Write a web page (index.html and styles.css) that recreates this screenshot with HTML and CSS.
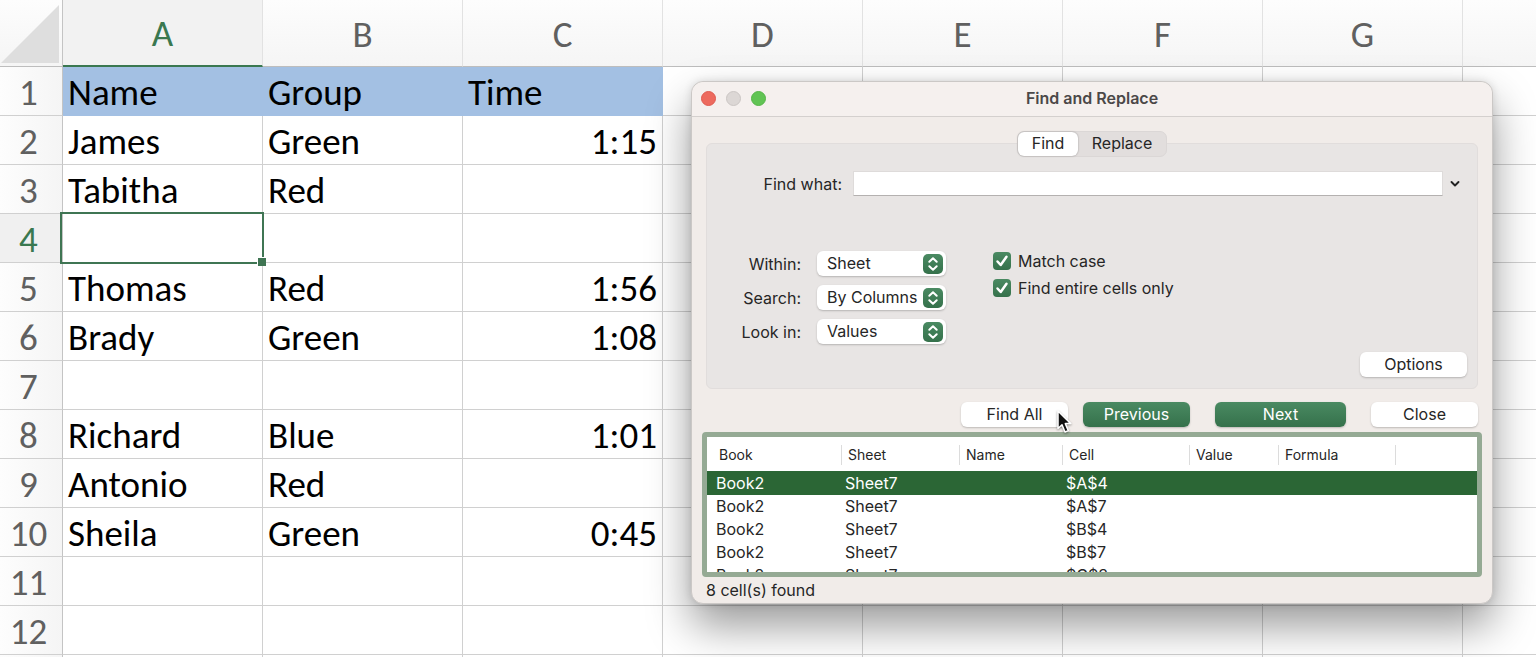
FILE: index.html
```html
<!DOCTYPE html>
<html lang="en">
<head>
<meta charset="utf-8">
<meta name="viewport" content="width=device-width, initial-scale=1">
<title>Find and Replace</title>
<link rel="stylesheet" href="styles.css">
</head>
<body>
<main class="workbook">
  <table class="grid">
    <colgroup><col class="col-index"><col class="col"><col class="col"><col class="col"><col class="col"><col class="col"><col class="col"><col class="col"><col></colgroup>
    <thead>
      <tr>
        <th class="corner"><svg class="corner-mark" viewBox="0 0 60 60" aria-hidden="true"><path d="M59 2V61H0Z" fill="#dedede"/></svg></th>
        <th class="active" scope="col">A</th><th scope="col">B</th><th scope="col">C</th><th scope="col">D</th><th scope="col">E</th><th scope="col">F</th><th scope="col">G</th><th></th>
      </tr>
    </thead>
    <tbody>
      <tr class="heading"><th scope="row">1</th><td>Name</td><td>Group</td><td>Time</td><td></td><td></td><td></td><td></td><td></td></tr>
      <tr><th scope="row">2</th><td>James</td><td>Green</td><td class="num">1:15</td><td></td><td></td><td></td><td></td><td></td></tr>
      <tr><th scope="row">3</th><td>Tabitha</td><td>Red</td><td></td><td></td><td></td><td></td><td></td><td></td></tr>
      <tr><th class="active" scope="row">4</th><td class="selected"></td><td></td><td></td><td></td><td></td><td></td><td></td><td></td></tr>
      <tr><th scope="row">5</th><td>Thomas</td><td>Red</td><td class="num">1:56</td><td></td><td></td><td></td><td></td><td></td></tr>
      <tr><th scope="row">6</th><td>Brady</td><td>Green</td><td class="num">1:08</td><td></td><td></td><td></td><td></td><td></td></tr>
      <tr><th scope="row">7</th><td></td><td></td><td></td><td></td><td></td><td></td><td></td><td></td></tr>
      <tr><th scope="row">8</th><td>Richard</td><td>Blue</td><td class="num">1:01</td><td></td><td></td><td></td><td></td><td></td></tr>
      <tr><th scope="row">9</th><td>Antonio</td><td>Red</td><td></td><td></td><td></td><td></td><td></td><td></td></tr>
      <tr><th scope="row">10</th><td>Sheila</td><td>Green</td><td class="num">0:45</td><td></td><td></td><td></td><td></td><td></td></tr>
      <tr><th scope="row">11</th><td></td><td></td><td></td><td></td><td></td><td></td><td></td><td></td></tr>
      <tr><th scope="row">12</th><td></td><td></td><td></td><td></td><td></td><td></td><td></td><td></td></tr>
      <tr><th></th><td></td><td></td><td></td><td></td><td></td><td></td><td></td><td></td></tr>
    </tbody>
  </table>

  <section class="dialog" role="dialog" aria-labelledby="dialog-title">
    <header class="titlebar">
      <div class="lights">
        <button class="light light-close" type="button" aria-label="Close window"></button>
        <button class="light light-min" type="button" aria-label="Minimize window" disabled></button>
        <button class="light light-zoom" type="button" aria-label="Zoom window"></button>
      </div>
      <h1 class="title" id="dialog-title">Find and Replace</h1>
    </header>
    <div class="dialog-body">
      <div class="tabs" role="tablist">
        <button class="tab tab-on" type="button" role="tab" aria-selected="true">Find</button>
        <button class="tab" type="button" role="tab" aria-selected="false">Replace</button>
      </div>
      <div class="panel">
        <div class="find-row">
          <label for="find-what">Find what:</label>
          <input class="find-input" id="find-what" type="text">
          <button class="history" type="button" aria-label="Recent searches">
            <svg width="10" height="8" viewBox="0 0 10 8" aria-hidden="true"><path d="M1.5 2L5 5.5L8.500 2" fill="none" stroke="#222" stroke-width="1.900" stroke-linecap="round" stroke-linejoin="round"/></svg>
          </button>
        </div>
        <div class="settings">
          <div class="choices">
            <label for="within">Within:</label>
            <div class="picker"><select id="within"><option>Sheet</option></select><svg class="stepper" viewBox="0 0 20 20" aria-hidden="true"><path d="M6.300 7.800L10 4.200L13.700 7.800M6.300 12.200L10 15.800L13.700 12.200"/></svg></div>
            <label for="search">Search:</label>
            <div class="picker"><select id="search"><option>By Columns</option></select><svg class="stepper" viewBox="0 0 20 20" aria-hidden="true"><path d="M6.300 7.800L10 4.200L13.700 7.800M6.300 12.200L10 15.800L13.700 12.200"/></svg></div>
            <label for="look-in">Look in:</label>
            <div class="picker"><select id="look-in"><option>Values</option></select><svg class="stepper" viewBox="0 0 20 20" aria-hidden="true"><path d="M6.300 7.800L10 4.200L13.700 7.800M6.300 12.200L10 15.800L13.700 12.200"/></svg></div>
          </div>
          <div class="checks">
            <label class="check"><span class="box"><input type="checkbox" checked><svg class="tick" viewBox="0 0 18 18" aria-hidden="true"><path d="M4.500 9.500L7.700 13L13.500 4.700"/></svg></span>Match case</label>
            <label class="check"><span class="box"><input type="checkbox" checked><svg class="tick" viewBox="0 0 18 18" aria-hidden="true"><path d="M4.500 9.500L7.700 13L13.500 4.700"/></svg></span>Find entire cells only</label>
          </div>
        </div>
        <button class="btn options" type="button">Options</button>
      </div>
      <div class="actions">
        <div class="find-all">
          <button class="btn" type="button">Find All</button>
          <svg class="pointer" viewBox="0 0 18 26" aria-hidden="true"><path d="M2 2V19.500L6 15.800L9 23L12.300 21.600L9.300 14.600H14.800Z" fill="#111" stroke="#fff" stroke-width="1.500" stroke-linejoin="round"/></svg>
        </div>
        <button class="btn btn-green" type="button">Previous</button>
        <button class="btn btn-green btn-next" type="button">Next</button>
        <button class="btn btn-close" type="button">Close</button>
      </div>
      <div class="results">
        <table class="result-table">
          <colgroup><col class="w-book"><col class="w-sheet"><col class="w-name"><col class="w-cell"><col class="w-value"><col class="w-formula"><col></colgroup>
          <thead><tr><th scope="col"><span>Book</span></th><th scope="col"><span>Sheet</span></th><th scope="col"><span>Name</span></th><th scope="col"><span>Cell</span></th><th scope="col"><span>Value</span></th><th scope="col"><span>Formula</span></th><th></th></tr></thead>
          <tbody>
            <tr class="current"><td>Book2</td><td>Sheet7</td><td></td><td>$A$4</td><td></td><td></td><td></td></tr>
            <tr><td>Book2</td><td>Sheet7</td><td></td><td>$A$7</td><td></td><td></td><td></td></tr>
            <tr><td>Book2</td><td>Sheet7</td><td></td><td>$B$4</td><td></td><td></td><td></td></tr>
            <tr><td>Book2</td><td>Sheet7</td><td></td><td>$B$7</td><td></td><td></td><td></td></tr>
            <tr><td>Book2</td><td>Sheet7</td><td></td><td>$C$3</td><td></td><td></td><td></td></tr>
          </tbody>
        </table>
      </div>
      <p class="status">8 cell(s) found</p>
    </div>
  </section>
</main>
</body>
</html>
```
FILE: styles.css
```css
* { box-sizing: border-box; }
body { margin: 0; background: #fff; }
button, input, select { font: inherit; color: inherit; }

.workbook { position: relative; height: 100vh; overflow: hidden; }

/* Spreadsheet */
.grid {
  width: 100%;
  table-layout: fixed;
  border-collapse: separate;
  border-spacing: 0;
  font: 37px/40px Carlito, Calibri, "Noto Sans", sans-serif;
  color: #000;
}
.col-index { width: 63px; }
.col { width: 200px; }
.grid th, .grid td {
  height: 49px;
  padding: 3px 5px 0;
  border-right: 1px solid #d0d0d0;
  border-bottom: 1px solid #d0d0d0;
  text-align: left;
  white-space: nowrap;
}
.grid th { font-weight: 400; text-align: center; color: #606060; }
.grid thead th {
  height: 67px;
  background: linear-gradient(#fdfdfd, #f5f5f5);
  border-right-color: #e2e2e2;
  border-bottom-color: #bdbdbd;
}
.grid tbody th {
  background: linear-gradient(90deg, #fdfdfd, #f5f5f5);
  border-right-color: #c4c4c4;
  padding: 3px 5px 0 0;
}
.grid th:last-child, .grid td:last-child { border-right: 0; }
.grid thead .active { background: #f2f2f2; color: #3a7850; border-bottom: 2px solid #3a7850; }
.grid tbody .active { background: #f0f0f0; color: #3a7850; }
.grid thead .corner { padding: 0; border-right-color: #c4c4c4; }
.corner-mark { display: block; width: 60px; height: 60px; }
.heading td:nth-child(-n+4) { background: #a3c0e3; border-color: #a3c0e3; }
.grid .num { text-align: right; }
.selected { position: relative; }
.selected::before {
  content: "";
  position: absolute;
  inset: -2px -2px -2px -3px;
  border: 2px solid #3f7553;
}
.selected::after {
  content: "";
  position: absolute;
  right: -4px;
  bottom: -4px;
  width: 8px;
  height: 8px;
  background: #3f7553;
  border: solid #fff;
  border-width: 1px 0 0 1px;
}

/* Dialog window */
.dialog {
  position: absolute;
  top: 81px;
  right: 43px;
  width: 802px;
  border-radius: 12px;
  background: #f1ece9;
  border: 1px solid #cbc8c6;
  box-shadow: 0 22px 44px rgba(0, 0, 0, .4), 0 0 8px rgba(0, 0, 0, .12);
  font: 16px/20px Inter, "Liberation Sans", sans-serif;
  color: #262626;
}
.titlebar {
  display: grid;
  grid-template-columns: 1fr auto 1fr;
  align-items: center;
  height: 35px;
  padding: 0 9px 2px;
  border-bottom: 1px solid #d4d0ce;
  border-radius: 12px 12px 0 0;
  background: #f5f0ee;
}
.lights { display: flex; gap: 10px; }
.light { width: 15px; height: 15px; padding: 0; border: 1px solid #df5a50; border-radius: 50%; background: #ed6a5e; }
.light-min { background: #dcd7d5; border-color: #cbc6c4; }
.light-zoom { background: #61c454; border-color: #55b548; }
.title { margin: 0; font-size: 16px; line-height: 20px; font-weight: 600; color: #4b4848; }

.dialog-body { padding: 14px 10px 2px; }
.tabs {
  position: relative;
  display: flex;
  width: 150px;
  height: 26px;
  margin: 0 auto -14px;
  border-radius: 7px;
  background: #e2dedd;
  border: 1px solid #dbd7d6;
}
.tab { flex: 1 1 auto; padding: 0 10px 2px; border: 0; border-radius: 6px; background: none; }
.tab-on { background: #fff; box-shadow: 0 0 2px rgba(0, 0, 0, .35); }

.panel {
  display: flex;
  flex-direction: column;
  margin: 0 4px;
  padding: 27px 10px 11px;
  border: 1px solid #e1dddc;
  border-radius: 6px;
  background: #e8e5e4;
}
.find-row { display: grid; grid-template-columns: 125px 1fr 24px; align-items: center; }
.find-row label { text-align: right; }
.find-input {
  min-width: 0;
  height: 25px;
  margin-left: 11px;
  padding: 0 6px;
  border: 1px solid #dedbda;
  border-bottom-color: #b4b1b0;
  background: #fff;
}
.history { display: grid; place-items: center; height: 24px; padding: 0; border: 0; background: none; }
.settings { display: flex; gap: 47px; margin-top: 55px; }
.choices { display: grid; grid-template-columns: 84px 129px; column-gap: 16px; row-gap: 9px; align-items: center; }
.choices label { text-align: right; }
.picker { position: relative; display: flex; }
.picker select {
  appearance: none;
  width: 100%;
  height: 25px;
  padding: 0 26px 2px 10px;
  border: 0;
  border-radius: 6px;
  background: #fff;
  box-shadow: 0 1px 2px rgba(0, 0, 0, .22);
}
.stepper {
  position: absolute;
  top: 3px;
  right: 3px;
  width: 20px;
  height: 20px;
  border-radius: 5px;
  background: linear-gradient(#4a8a62, #35714b);
  pointer-events: none;
}
.stepper path, .tick path { fill: none; stroke: #fff; stroke-width: 2; stroke-linecap: round; stroke-linejoin: round; }
.checks { display: flex; flex-direction: column; gap: 7px; }
.check { display: flex; align-items: center; gap: 7px; }
.box { position: relative; display: flex; }
.box input { appearance: none; width: 18px; height: 18px; margin: 0; border-radius: 4px; background: linear-gradient(#4a8a62, #35714b); }
.tick { position: absolute; inset: 0; width: 18px; height: 18px; pointer-events: none; }
.tick path { stroke-width: 2.5; }

.btn {
  width: 107px;
  height: 25px;
  padding: 0 0 2px;
  border: 0;
  border-radius: 6px;
  background: #fff;
  box-shadow: 0 1px 2px rgba(0, 0, 0, .22);
}
.options { align-self: flex-end; margin-top: 8px; }
.actions { display: flex; justify-content: flex-end; margin: 13px 4px 0; }
.find-all { position: relative; margin-right: 15px; }
.pointer { position: absolute; top: 7px; right: -6px; width: 18px; height: 26px; filter: drop-shadow(0 1px 1px rgba(0, 0, 0, .4)); }
.btn-green { background: linear-gradient(#4a8a62, #35714b); color: #fff; }
.btn-next { width: 131px; margin: 0 25px; }

.results {
  height: 145px;
  margin-top: 5px;
  overflow: hidden;
  border: 5px solid #95aa94;
  border-radius: 4px;
  background: #fff;
}
.result-table { width: 100%; table-layout: fixed; border-collapse: collapse; }
.w-book { width: 134px; }
.w-sheet { width: 118px; }
.w-name { width: 103px; }
.w-cell { width: 127px; }
.w-value { width: 89px; }
.w-formula { width: 117px; }
.result-table th { height: 34px; padding: 2px 0 0; font-size: 14px; font-weight: 400; text-align: left; }
.result-table th span { display: block; padding-left: 6px; border-left: 1px solid #dcdcdc; }
.result-table th:first-child span { padding-left: 12px; border: 0; }
.result-table th:last-child { background: linear-gradient(#dcdcdc, #dcdcdc) 0 8px / 1px 20px no-repeat; }
.result-table td { height: 23px; padding: 0 0 0 4px; line-height: 23px; }
.result-table td:first-child { padding-left: 9px; }
.result-table .current td { height: 24px; background: #2b6635; color: #fff; }
.status { margin: 2px 4px 0; line-height: 22px; }
```
